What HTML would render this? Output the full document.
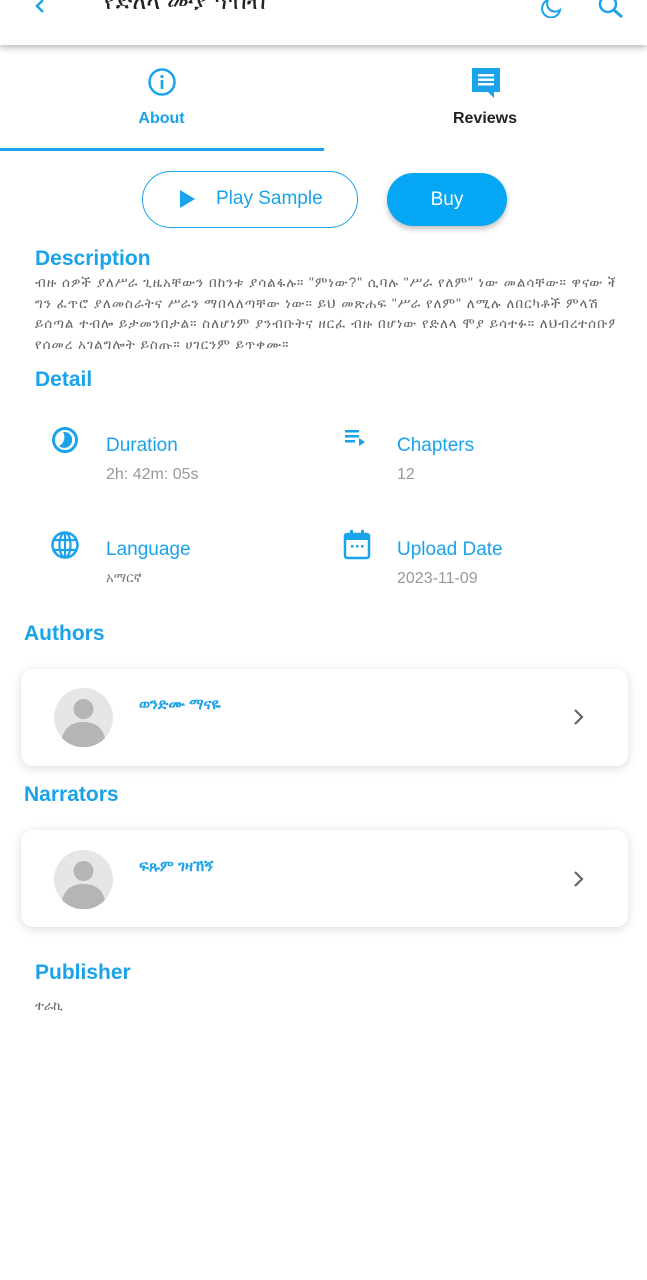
<!DOCTYPE html>
<html><head><meta charset="utf-8"><style>
*{margin:0;padding:0;box-sizing:border-box}
body{width:647px;height:1280px;background:#fff;font-family:"Liberation Sans",sans-serif;position:relative;overflow:hidden}
.a{position:absolute}
.h{font-size:21px;color:#1aa3ea;font-weight:bold}
.lbl{font-size:19px;color:#1aa3ea}
.val{font-size:16px;color:#999}
.desc{font-size:13.5px;color:#666;line-height:20.5px;white-space:nowrap;overflow:hidden;letter-spacing:1px}
.card{position:absolute;left:21px;width:607px;height:97px;background:#fff;border-radius:12px;box-shadow:0 2px 10px rgba(0,0,0,.15)}
</style></head><body>
<div class="a" style="left:0;top:0;width:647px;height:45px;background:#fff;box-shadow:0 3px 6px rgba(0,0,0,.25)"></div>
<svg class="a" style="left:32px;top:0" width="16" height="14"><path d="M11 0 L5 6 L11 12" stroke="#1aa3ea" stroke-width="2.5" fill="none"/></svg>
<div class="a" style="left:104px;top:-12px;font-size:24px;color:#222">የድለላ ሙያ ጥበብ</div>
<svg class="a" style="left:540px;top:0" width="24" height="18"><path d="M8 0 A9 9 0 1 0 20 10 A8 8 0 0 1 8 0" stroke="#1aa3ea" stroke-width="2" fill="none"/></svg>
<svg class="a" style="left:598px;top:0" width="30" height="20"><circle cx="10" cy="4" r="8" stroke="#1aa3ea" stroke-width="2.5" fill="none"/><path d="M16 10 L24 17" stroke="#1aa3ea" stroke-width="3"/></svg>

<svg class="a" style="left:147px;top:67px" width="30" height="30"><circle cx="15" cy="15" r="12.5" stroke="#1aa3ea" stroke-width="2.5" fill="none"/><rect x="13.7" y="13" width="2.6" height="9" fill="#1aa3ea"/><circle cx="15" cy="9.5" r="1.6" fill="#1aa3ea"/></svg>
<div class="a" style="left:0;width:323px;top:110px;text-align:center;font-size:16px;font-weight:bold;color:#1aa3ea">About</div>
<svg class="a" style="left:470px;top:66px" width="32" height="32"><path d="M2 2 H30 V26 H24 V32 L18 26 H2 Z" fill="#1aa3ea"/><rect x="8" y="8" width="16" height="2.5" fill="#fff"/><rect x="8" y="12.5" width="16" height="2.5" fill="#fff"/><rect x="8" y="17" width="16" height="2.5" fill="#fff"/></svg>
<div class="a" style="left:323px;width:324px;top:110px;text-align:center;font-size:16px;font-weight:bold;color:#222">Reviews</div>
<div class="a" style="left:0;top:148px;width:324px;height:3px;background:#1aa3ea"></div>

<div class="a" style="left:142px;top:171px;width:216px;height:57px;border:1.5px solid #1aa3ea;border-radius:29px"></div>
<svg class="a" style="left:180px;top:190px" width="16" height="18"><path d="M0 0 L15 9 L0 18Z" fill="#1aa3ea"/></svg>
<div class="a" style="left:216px;top:188px;font-size:19px;color:#1aa3ea">Play Sample</div>
<div class="a" style="left:387px;top:173px;width:120px;height:53px;background:#05a6f3;border-radius:27px;box-shadow:0 3px 6px rgba(0,0,0,.25);color:#fff;font-size:19px;text-align:center;line-height:53px">Buy</div>

<div class="a h" style="left:35px;top:247px">Description</div>
<div class="a desc" style="left:35px;top:273px;width:580px">ብዙ ሰዎች ያለሥራ ጊዜአቸውን በከንቱ ያሳልፋሉ። "ምነው?" ሲባሉ "ሥራ የለም" ነው መልሳቸው። ዋናው ችግር<br>ግን ፈጥሮ ያለመስራትና ሥራን ማበላለጣቸው ነው። ይህ መጽሐፍ "ሥራ የለም" ለሚሉ ለበርካቶች ምላሽ<br>ይሰጣል ተብሎ ይታመንበታል። ስለሆነም ያንብቡትና ዘርፈ ብዙ በሆነው የድለላ ሞያ ይሳተፉ። ለህብረተሰቡም<br>የሰመረ አገልግሎት ይስጡ። ሀገርንም ይጥቀሙ።</div>
<div class="a h" style="left:35px;top:368px">Detail</div>

<svg class="a" style="left:51px;top:426px" width="28" height="28"><circle cx="14" cy="14" r="11.5" stroke="#1aa3ea" stroke-width="3" fill="none"/><path d="M12 6 A8 8 0 1 1 8 20 A10 10 0 0 0 12 6Z" fill="#1aa3ea"/></svg>
<div class="a lbl" style="left:106px;top:435px">Duration</div>
<div class="a val" style="left:106px;top:466px">2h: 42m: 05s</div>
<svg class="a" style="left:345px;top:430px" width="24" height="22"><rect x="0" y="0" width="14" height="2.5" fill="#1aa3ea"/><rect x="0" y="5" width="14" height="2.5" fill="#1aa3ea"/><rect x="0" y="10" width="10" height="2.5" fill="#1aa3ea"/><path d="M14 8 L20 12 L14 16Z" fill="#1aa3ea"/></svg>
<div class="a lbl" style="left:397px;top:435px">Chapters</div>
<div class="a val" style="left:397px;top:466px">12</div>

<svg class="a" style="left:50px;top:530px" width="30" height="30"><circle cx="15" cy="15" r="12.5" stroke="#1aa3ea" stroke-width="2.5" fill="none"/><ellipse cx="15" cy="15" rx="5.5" ry="12.5" stroke="#1aa3ea" stroke-width="2.2" fill="none"/><path d="M3 10 H27 M3 20 H27 M15 2 V28" stroke="#1aa3ea" stroke-width="2.2"/></svg>
<div class="a lbl" style="left:106px;top:539px">Language</div>
<div class="a val" style="left:106px;top:570px;font-size:13px;color:#777">አማርኛ</div>
<svg class="a" style="left:343px;top:530px" width="28" height="30"><rect x="2" y="4" width="24" height="24" rx="2" stroke="#1aa3ea" stroke-width="2.5" fill="none"/><rect x="2" y="4" width="24" height="6" fill="#1aa3ea"/><rect x="7" y="0" width="3" height="6" fill="#1aa3ea"/><rect x="18" y="0" width="3" height="6" fill="#1aa3ea"/><rect x="8" y="15" width="2.5" height="2.5" fill="#1aa3ea"/><rect x="13" y="15" width="2.5" height="2.5" fill="#1aa3ea"/><rect x="18" y="15" width="2.5" height="2.5" fill="#1aa3ea"/></svg>
<div class="a lbl" style="left:397px;top:539px">Upload Date</div>
<div class="a val" style="left:397px;top:570px">2023-11-09</div>

<div class="a h" style="left:24px;top:622px">Authors</div>
<div class="card" style="top:669px"></div>
<svg class="a" style="left:54px;top:688px" width="59" height="59"><circle cx="29.5" cy="29.5" r="29.5" fill="#e6e6e6"/><circle cx="29.5" cy="21" r="10" fill="#b5b5b5"/><path d="M8 50 Q12 34 29.5 34 Q47 34 51 50 A29.5 29.5 0 0 1 8 50Z" fill="#b5b5b5"/></svg>
<div class="a" style="left:139px;top:696px;font-size:15px;font-weight:bold;color:#1aa3ea">ወንድሙ ማናዬ</div>
<svg class="a" style="left:573px;top:708px" width="12" height="18"><path d="M2 2 L9 9 L2 16" stroke="#666" stroke-width="2.2" fill="none"/></svg>

<div class="a h" style="left:24px;top:783px">Narrators</div>
<div class="card" style="top:830px"></div>
<svg class="a" style="left:54px;top:850px" width="59" height="59"><circle cx="29.5" cy="29.5" r="29.5" fill="#e6e6e6"/><circle cx="29.5" cy="21" r="10" fill="#b5b5b5"/><path d="M8 50 Q12 34 29.5 34 Q47 34 51 50 A29.5 29.5 0 0 1 8 50Z" fill="#b5b5b5"/></svg>
<div class="a" style="left:139px;top:858px;font-size:15px;font-weight:bold;color:#1aa3ea">ፍጹም ገዛኸኝ</div>
<svg class="a" style="left:573px;top:870px" width="12" height="18"><path d="M2 2 L9 9 L2 16" stroke="#666" stroke-width="2.2" fill="none"/></svg>

<div class="a h" style="left:35px;top:961px">Publisher</div>
<div class="a" style="left:35px;top:998px;font-size:13px;color:#666">ተራኪ</div>
</body></html>
